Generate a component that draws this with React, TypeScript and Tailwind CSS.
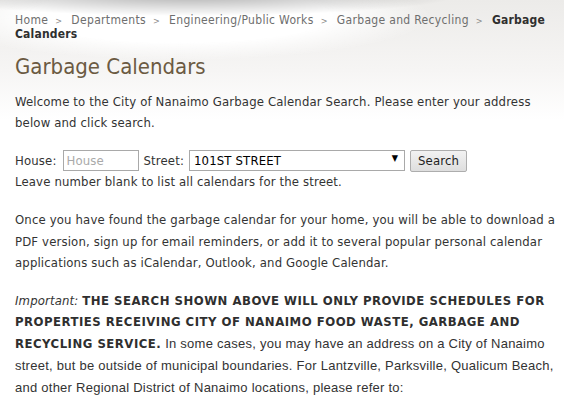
import React from 'react';

const crumbs = ['Home', 'Departments', 'Engineering/Public Works', 'Garbage and Recycling'];

function Crumbs() {
  return (
    <div className="text-[12px] leading-[13px] tracking-[0.33px] text-[#6e6e6e]">
      {crumbs.map((c) => (
        <React.Fragment key={c}>
          <a className="cursor-pointer">{c}</a>
          <span className="pl-[7px] pr-[9px] text-[9px] text-[#8a8a8a]">&gt;</span>
        </React.Fragment>
      ))}
      <span className="font-bold tracking-[0.2px] text-[#2f2f2f]">Garbage Calanders</span>
    </div>
  );
}

function SearchForm() {
  return (
    <div className="mt-[17px]">
      <div className="flex items-center h-[21px]">
        <label className="mr-[6px]">House:</label>
        <input
          className="w-[76px] h-[21px] border border-[#a9a9a9] bg-white px-[3px] text-[13px] placeholder:text-[#a9a9a9] outline-none"
          placeholder="House"
        />
        <label className="ml-[5px] mr-[5px]">Street:</label>
        <div className="relative w-[216px] h-[21px] border border-[#a9a9a9] bg-white pl-[4px] flex items-center text-black">
          <span>101ST STREET</span>
          <span className="absolute right-[6px] top-[1px] text-[9px] text-black">▼</span>
        </div>
        <button className="ml-[5px] w-[57px] h-[22px] border border-[#adadad] rounded-[2px] bg-[linear-gradient(#f2f2f2,#dedede)] text-[#222]">
          Search
        </button>
      </div>
      <p className="leading-[21px]">Leave number blank to list all calendars for the street.</p>
    </div>
  );
}

export default function App() {
  return (
    <div
      className="min-h-[403px] w-full overflow-hidden text-[13px] tracking-[0.15px] text-[#333] bg-[radial-gradient(ellipse_270px_22px_at_190px_-6px,rgba(0,0,0,0.32),rgba(0,0,0,0)),radial-gradient(ellipse_250px_44px_at_180px_16px,#fff_60%,rgba(255,255,255,0)),linear-gradient(#ecebe9,#f6f5f4_70px,#fff_120px)]"
      style={{ fontFamily: '"DejaVu Sans Condensed", "DejaVu Sans", sans-serif' }}
    >
      <div className="pl-[15px] pr-[4px] pt-[14px]">
        <Crumbs />
        <h1 className="mt-[12px] text-[22px] leading-[28px] tracking-normal text-[#6b5a42]">Garbage Calendars</h1>
        <p className="mt-[10px] leading-[21px]">
          Welcome to the City of Nanaimo Garbage Calendar Search. Please enter your address below and click search.
        </p>
        <SearchForm />
        <p className="mt-[17px] leading-[21.5px]">
          Once you have found the garbage calendar for your home, you will be able to download a PDF version, sign up
          for email reminders, or add it to several popular personal calendar applications such as iCalendar, Outlook,
          and Google Calendar.
        </p>
        <p className="mt-[16px] leading-[21.75px]">
          <em>Important:</em>{' '}
          <strong className="tracking-[0.5px] text-[#2f2f2f]">
            THE SEARCH SHOWN ABOVE WILL ONLY PROVIDE SCHEDULES FOR PROPERTIES RECEIVING CITY OF NANAIMO FOOD WASTE,
            GARBAGE AND RECYCLING SERVICE.
          </strong>{' '}
          <span className="text-[13px] tracking-[0.25px]" style={{ fontFamily: '"Liberation Sans", Arial, sans-serif' }}>
            In some cases, you may have an address on a City of Nanaimo street, but be outside of municipal boundaries.
            For Lantzville, Parksville, Qualicum Beach, and other Regional District of Nanaimo locations, please refer
            to:
          </span>
        </p>
        <p className="mt-[2px] leading-[21px] text-[#3b6fb0]">
          <a>Regional District of Nanaimo Garbage and Recycling Collection Schedules</a>
        </p>
      </div>
    </div>
  );
}
